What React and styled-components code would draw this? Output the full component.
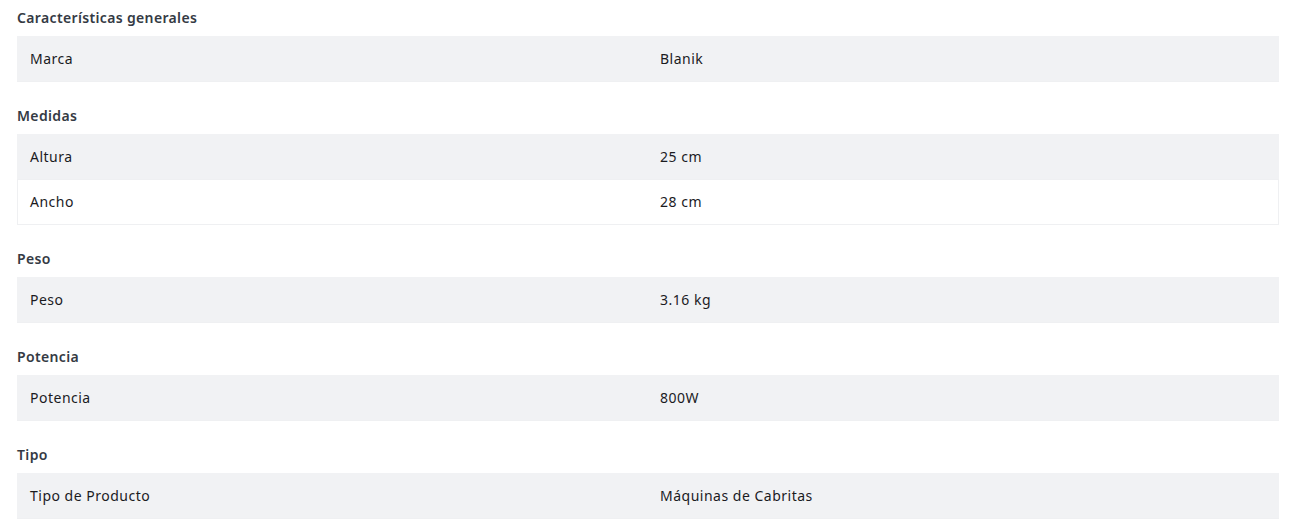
import React from 'react';
import styled, { createGlobalStyle } from 'styled-components';

const Global = createGlobalStyle`
  body {
    margin: 0;
    background: #fff;
    font-family: "Noto Sans", "Open Sans", sans-serif;
  }
`;

const Wrapper = styled.div`
  padding: 8px 17px;
  display: flex;
  flex-direction: column;
  gap: 24px;
`;

const Section = styled.section`
  display: flex;
  flex-direction: column;
  gap: 8px;
`;

const Heading = styled.h3`
  margin: 0;
  font-size: 14px;
  line-height: 20px;
  font-weight: 600;
  letter-spacing: 0.35px;
  color: #343a44;
`;

const Table = styled.div`
  border-bottom: 1px solid #eff0f2;
`;

const Row = styled.div`
  display: grid;
  grid-template-columns: 1fr 1fr;
  align-items: center;
  height: 44px;
  border-top: 1px solid ${({ $odd }) => ($odd ? '#f1f2f4' : '#eff0f2')};
  border-left: 1px solid ${({ $odd }) => ($odd ? '#f1f2f4' : '#eff0f2')};
  border-right: 1px solid ${({ $odd }) => ($odd ? '#f1f2f4' : '#eff0f2')};
  background: ${({ $odd }) => ($odd ? '#f1f2f4' : '#ffffff')};
`;

const Cell = styled.div`
  padding: 0 0 1px 12px;
  font-size: 14px;
  line-height: 20px;
  letter-spacing: 0.5px;
  color: #1b1b1f;
`;

const data = [
  { title: 'Características generales', rows: [['Marca', 'Blanik']] },
  { title: 'Medidas', rows: [['Altura', '25 cm'], ['Ancho', '28 cm']] },
  { title: 'Peso', rows: [['Peso', '3.16 kg']] },
  { title: 'Potencia', rows: [['Potencia', '800W']] },
  { title: 'Tipo', rows: [['Tipo de Producto', 'Máquinas de Cabritas']] },
];

export default function App() {
  return (
    <>
      <Global />
      <Wrapper>
        {data.map((s) => (
          <Section key={s.title}>
            <Heading>{s.title}</Heading>
            <Table>
              {s.rows.map(([k, v], i) => (
                <Row key={k} $odd={i % 2 === 0}>
                  <Cell>{k}</Cell>
                  <Cell>{v}</Cell>
                </Row>
              ))}
            </Table>
          </Section>
        ))}
      </Wrapper>
    </>
  );
}
